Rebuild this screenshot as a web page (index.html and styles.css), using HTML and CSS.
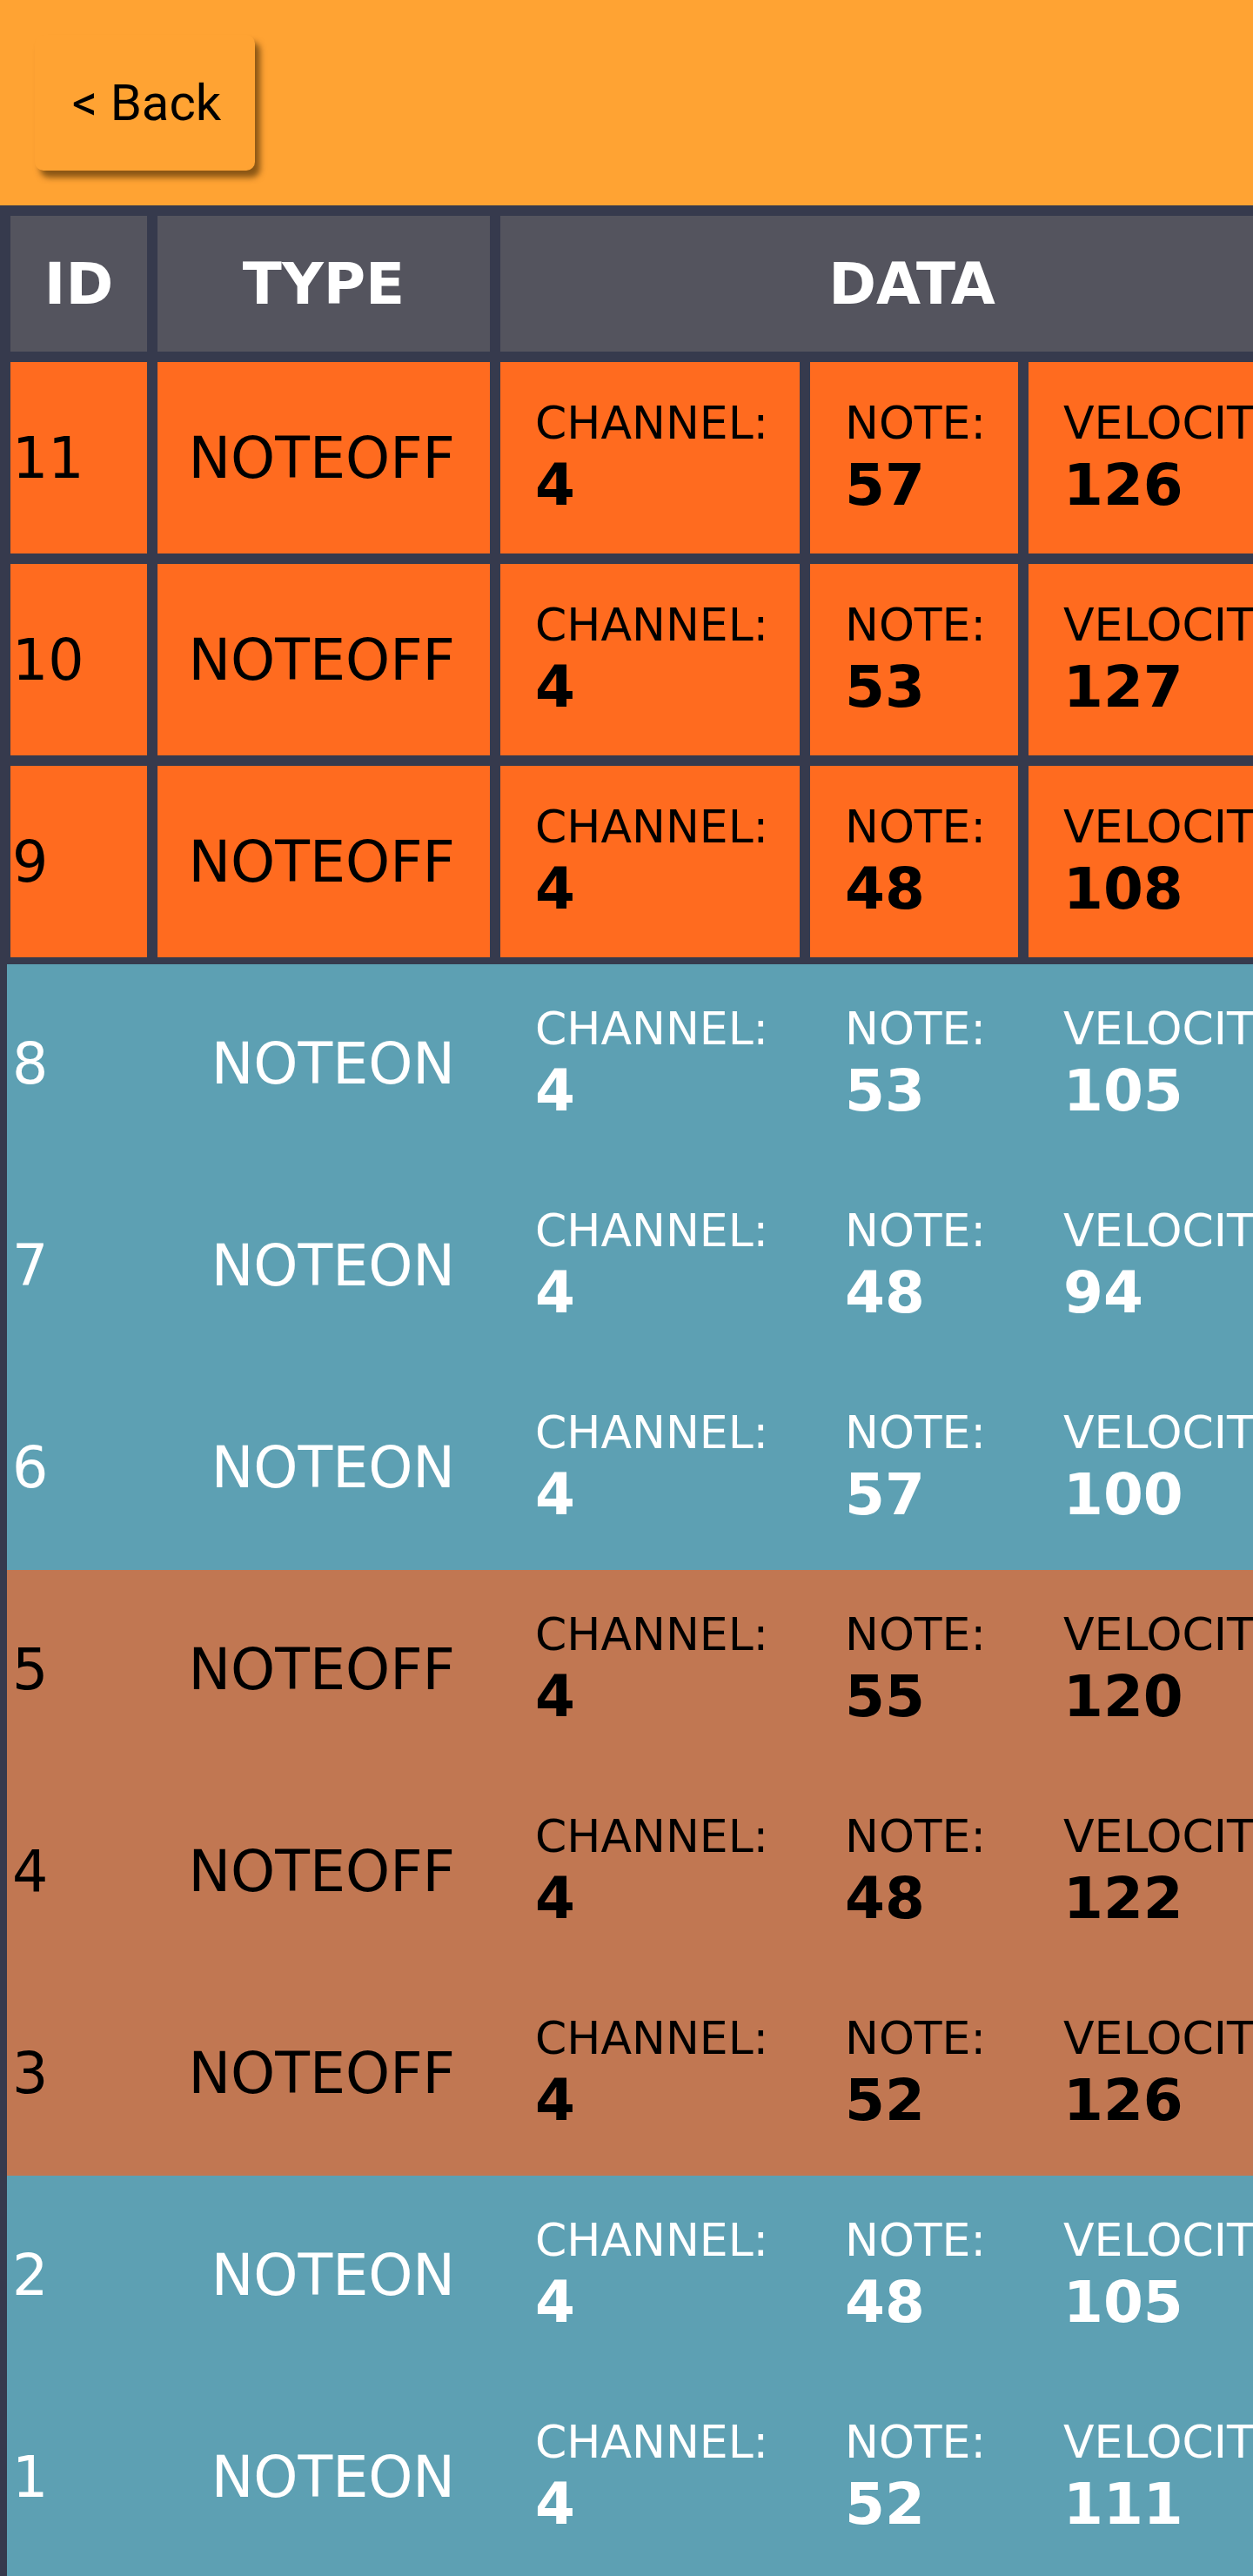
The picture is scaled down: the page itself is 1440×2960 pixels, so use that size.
FILE: index.html
```html
<html>

<head>
    <link rel="stylesheet" href="styles.css">
</head>

<body>
    <div class="screen">
        <div class="topbar">
            <button class="back-btn">&lt; Back</button>
        </div>

        <div class="log">
            <div class="row head">
                <div class="cell">ID</div>
                <div class="cell">TYPE</div>
                <div class="cell data-head">DATA</div>
            </div>

            <div class="row fresh">
                <div class="cell id">11</div>
                <div class="cell type">NOTEOFF</div>
                <div class="cell field"><span class="label">CHANNEL:</span><span class="value">4</span></div>
                <div class="cell field"><span class="label">NOTE:</span><span class="value">57</span></div>
                <div class="cell field"><span class="label">VELOCITY:</span><span class="value">126</span></div>
            </div>
            <div class="row fresh">
                <div class="cell id">10</div>
                <div class="cell type">NOTEOFF</div>
                <div class="cell field"><span class="label">CHANNEL:</span><span class="value">4</span></div>
                <div class="cell field"><span class="label">NOTE:</span><span class="value">53</span></div>
                <div class="cell field"><span class="label">VELOCITY:</span><span class="value">127</span></div>
            </div>
            <div class="row fresh">
                <div class="cell id">9</div>
                <div class="cell type">NOTEOFF</div>
                <div class="cell field"><span class="label">CHANNEL:</span><span class="value">4</span></div>
                <div class="cell field"><span class="label">NOTE:</span><span class="value">48</span></div>
                <div class="cell field"><span class="label">VELOCITY:</span><span class="value">108</span></div>
            </div>

            <div class="row note-on">
                <div class="cell id">8</div>
                <div class="cell type">NOTEON</div>
                <div class="cell field"><span class="label">CHANNEL:</span><span class="value">4</span></div>
                <div class="cell field"><span class="label">NOTE:</span><span class="value">53</span></div>
                <div class="cell field"><span class="label">VELOCITY:</span><span class="value">105</span></div>
            </div>
            <div class="row note-on">
                <div class="cell id">7</div>
                <div class="cell type">NOTEON</div>
                <div class="cell field"><span class="label">CHANNEL:</span><span class="value">4</span></div>
                <div class="cell field"><span class="label">NOTE:</span><span class="value">48</span></div>
                <div class="cell field"><span class="label">VELOCITY:</span><span class="value">94</span></div>
            </div>
            <div class="row note-on">
                <div class="cell id">6</div>
                <div class="cell type">NOTEON</div>
                <div class="cell field"><span class="label">CHANNEL:</span><span class="value">4</span></div>
                <div class="cell field"><span class="label">NOTE:</span><span class="value">57</span></div>
                <div class="cell field"><span class="label">VELOCITY:</span><span class="value">100</span></div>
            </div>

            <div class="row note-off">
                <div class="cell id">5</div>
                <div class="cell type">NOTEOFF</div>
                <div class="cell field"><span class="label">CHANNEL:</span><span class="value">4</span></div>
                <div class="cell field"><span class="label">NOTE:</span><span class="value">55</span></div>
                <div class="cell field"><span class="label">VELOCITY:</span><span class="value">120</span></div>
            </div>
            <div class="row note-off">
                <div class="cell id">4</div>
                <div class="cell type">NOTEOFF</div>
                <div class="cell field"><span class="label">CHANNEL:</span><span class="value">4</span></div>
                <div class="cell field"><span class="label">NOTE:</span><span class="value">48</span></div>
                <div class="cell field"><span class="label">VELOCITY:</span><span class="value">122</span></div>
            </div>
            <div class="row note-off">
                <div class="cell id">3</div>
                <div class="cell type">NOTEOFF</div>
                <div class="cell field"><span class="label">CHANNEL:</span><span class="value">4</span></div>
                <div class="cell field"><span class="label">NOTE:</span><span class="value">52</span></div>
                <div class="cell field"><span class="label">VELOCITY:</span><span class="value">126</span></div>
            </div>

            <div class="row note-on">
                <div class="cell id">2</div>
                <div class="cell type">NOTEON</div>
                <div class="cell field"><span class="label">CHANNEL:</span><span class="value">4</span></div>
                <div class="cell field"><span class="label">NOTE:</span><span class="value">48</span></div>
                <div class="cell field"><span class="label">VELOCITY:</span><span class="value">105</span></div>
            </div>
            <div class="row note-on">
                <div class="cell id">1</div>
                <div class="cell type">NOTEON</div>
                <div class="cell field"><span class="label">CHANNEL:</span><span class="value">4</span></div>
                <div class="cell field"><span class="label">NOTE:</span><span class="value">52</span></div>
                <div class="cell field"><span class="label">VELOCITY:</span><span class="value">111</span></div>
            </div>
        </div>
    </div>
</body>

</html>
```

FILE: styles.css
```css
body {
    margin: 0;
    padding: 0;
    background-color: #363a4d;
    font-family: 'DejaVu Sans', Verdana, sans-serif;
}

.screen {
    width: 1440px;
    height: 2960px;
    overflow: hidden;
    background-color: #363a4d;
}

.topbar {
    height: 236px;
    background-color: #ffa333;
    padding: 40px 0 0 40px;
    box-sizing: border-box;
}

.back-btn {
    width: 253px;
    height: 156px;
    border: none;
    border-radius: 10px;
    background-color: #ffa333;
    box-shadow: 6px 8px 7px rgba(60, 35, 0, 0.6);
    font-family: Roboto, 'Noto Sans', sans-serif;
    font-size: 58px;
    color: #000;
    padding: 0 0 0 4px;
    cursor: pointer;
}

.log {
    padding: 8px 0 0 8px;
    width: 1540px;
}

.row {
    display: grid;
    grid-template-columns: 157px 382px 344px 239px 339px;
    grid-auto-rows: 220px;
    column-gap: 12px;
    padding: 4px;
    margin-bottom: 4px;
}

.row.head {
    grid-auto-rows: 156px;
}

.cell {
    display: flex;
    align-items: center;
    font-size: 65px;
    color: #000;
    white-space: nowrap;
    overflow: hidden;
}

.head .cell {
    background-color: #54545e;
    color: #fff;
    font-size: 66px;
    font-weight: bold;
    justify-content: center;
}

.head .data-head {
    grid-column: 3 / span 3;
}

.fresh .cell {
    background-color: #ff6b1f;
}

.note-on,
.note-off {
    padding-bottom: 8px;
    margin-bottom: 0;
}

.note-on {
    background-color: #5da0b3;
}

.note-on .cell {
    color: #fff;
}

.note-off {
    background-color: #c17752;
}

.cell.id {
    padding-left: 2px;
}

.cell.type {
    justify-content: flex-end;
    padding-right: 40px;
}

.cell.field {
    flex-direction: column;
    align-items: flex-start;
    justify-content: center;
    padding-left: 40px;
}

.label {
    font-size: 52px;
    line-height: 60px;
}

.value {
    font-size: 66px;
    line-height: 77px;
    font-weight: bold;
    margin-top: 3px;
}
```
